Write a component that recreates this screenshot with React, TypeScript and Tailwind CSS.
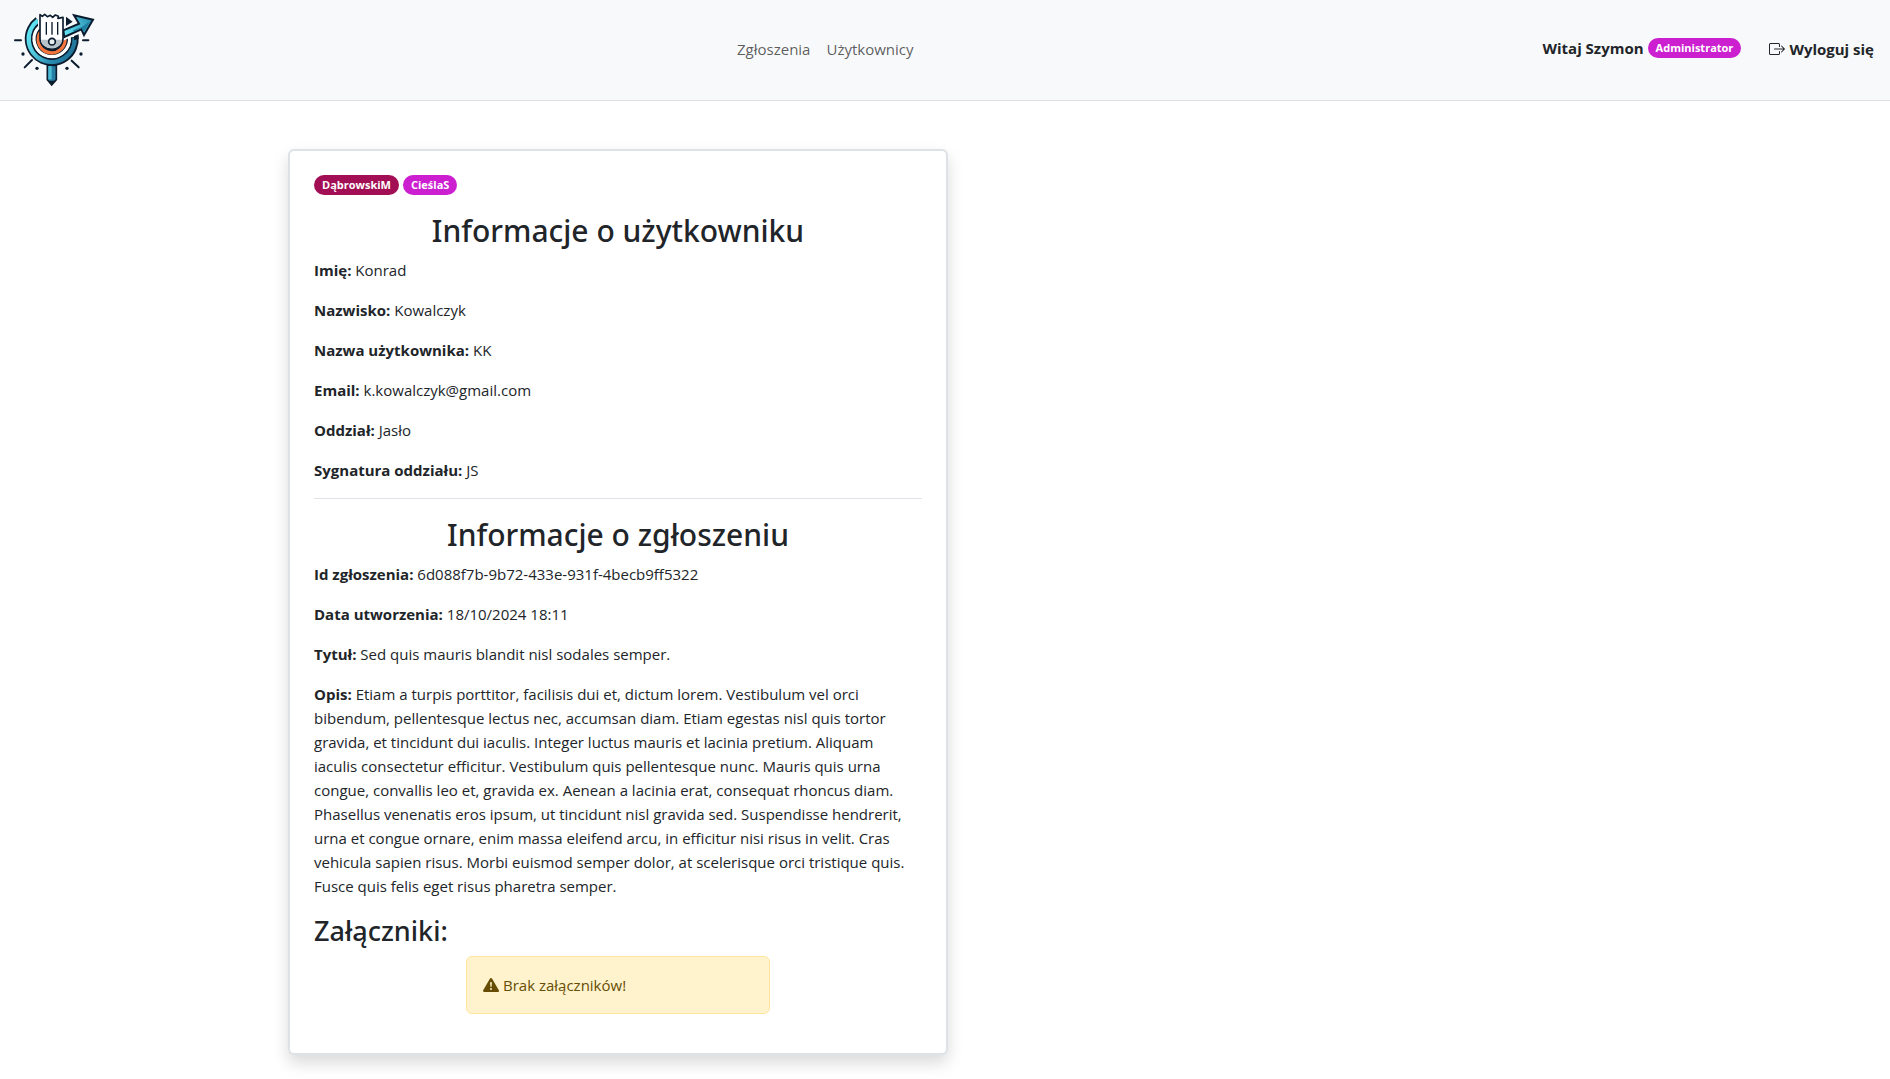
import { BsBoxArrowRight, BsExclamationTriangleFill } from "react-icons/bs";

const userInfo = [
  ["Imię:", "Konrad"],
  ["Nazwisko:", "Kowalczyk"],
  ["Nazwa użytkownika:", "KK"],
  ["Email:", "k.kowalczyk@gmail.com"],
  ["Oddział:", "Jasło"],
  ["Sygnatura oddziału:", "JS"],
];

const ticketInfo = [
  ["Id zgłoszenia:", "6d088f7b-9b72-433e-931f-4becb9ff5322"],
  ["Data utworzenia:", "18/10/2024 18:11"],
  ["Tytuł:", "Sed quis mauris blandit nisl sodales semper."],
  [
    "Opis:",
    "Etiam a turpis porttitor, facilisis dui et, dictum lorem. Vestibulum vel orci bibendum, pellentesque lectus nec, accumsan diam. Etiam egestas nisl quis tortor gravida, et tincidunt dui iaculis. Integer luctus mauris et lacinia pretium. Aliquam iaculis consectetur efficitur. Vestibulum quis pellentesque nunc. Mauris quis urna congue, convallis leo et, gravida ex. Aenean a lacinia erat, consequat rhoncus diam. Phasellus venenatis eros ipsum, ut tincidunt nisl gravida sed. Suspendisse hendrerit, urna et congue ornare, enim massa eleifend arcu, in efficitur nisi risus in velit. Cras vehicula sapien risus. Morbi euismod semper dolor, at scelerisque orci tristique quis. Fusce quis felis eget risus pharetra semper.",
  ],
];

function Logo() {
  return (
    <svg viewBox="36 36 252 228" className="h-[76px] w-[84px]" role="img" aria-label="Logo">
      <defs>
        <linearGradient id="ring" gradientUnits="userSpaceOnUse" x1="80" y1="90" x2="225" y2="170">
          <stop offset="0" stopColor="#62e8f4" />
          <stop offset="0.35" stopColor="#4fc3d9" />
          <stop offset="0.65" stopColor="#2a8bb0" />
          <stop offset="1" stopColor="#1f6f93" />
        </linearGradient>
        <linearGradient id="arrow" gradientUnits="userSpaceOnUse" x1="195" y1="100" x2="275" y2="60">
          <stop offset="0" stopColor="#63e3f0" />
          <stop offset="1" stopColor="#2b8fb2" />
        </linearGradient>
      </defs>
      <path d="M114 61.5A69 69 0 1 0 224 111" fill="none" stroke="#0b1c2e" strokeWidth="24" />
      <path d="M114 61.5A69 69 0 1 0 224 114" fill="none" stroke="url(#ring)" strokeWidth="13" />
      <path d="M112 86A53 53 0 1 0 207.500 110" fill="none" stroke="#ffffff" strokeWidth="9" />
      <path d="M125 92A39 39 0 1 0 194 111" fill="none" stroke="#0b1c2e" strokeWidth="19" />
      <path d="M125 92A40 40 0 1 0 194 111" fill="none" stroke="#f4753c" strokeWidth="10" />
      <path
        d="M190 89l47-20-16-25 62 14-29 51-7-20-54 25z"
        fill="none"
        stroke="#f8f9fa"
        strokeWidth="12"
      />
      <path d="M198 50l20 15-20 13z" fill="#0b1c2e" />
      <path d="M222 108l14-5v14l-14 4z" fill="#0b1c2e" />
      <path
        d="M190 91l47-20-15-25 57 13-27 46-8-17-51 23z"
        fill="url(#arrow)"
        stroke="#0b1c2e"
        strokeWidth="6"
      />
      <path d="M220 91l25-10 26-18-20 34-6-13-24 11z" fill="#1f7fa3" />
      <path d="M114 40h82v44h-82z" fill="#f8f9fa" />
      <path
        d="M120 44l7 5 7-6 8 7 9-4 7 6 8-7 9 4-1 6 15-3v64c0 18-15 31-34 31s-35-12-35-31z"
        fill="#ffffff"
        stroke="#0b1c2e"
        strokeWidth="5"
        strokeLinejoin="round"
      />
      <path d="M123 119h63c0 16-14 26-31 26s-31-10-32-26z" fill="#b8c2ca" />
      <path d="M139 66v38M156 66v38M173 66v38" stroke="#0b1c2e" strokeWidth="4" />
      <circle cx="156" cy="125" r="10" fill="#e7ecef" stroke="#0b1c2e" strokeWidth="5" />
      <path d="M142 196h27v43l-14 16-13-16z" fill="#287fa4" stroke="#0b1c2e" strokeWidth="5" />
      <path d="M145 198h10v40h-10z" fill="#4cbcd3" />
      <path d="M144 242h23l-12 12z" fill="#0b1c2e" />
      <path
        d="M45 121h18M249 121h16M96 180l-22 22M215 182l21 20"
        stroke="#0b1c2e"
        strokeWidth="6"
        strokeLinecap="round"
      />
      <g fill="#0b1c2e">
        <circle cx="69" cy="162" r="5" />
        <circle cx="243" cy="162" r="5" />
        <circle cx="111" cy="205" r="5" />
        <circle cx="201" cy="205" r="5" />
      </g>
    </svg>
  );
}

function Badge({ color, children }: { color: string; children: string }) {
  return (
    <span className={`inline-block rounded-full px-2 text-[11px] leading-5 font-bold text-white ${color}`}>
      {children}
    </span>
  );
}

function SectionTitle({ children }: { children: string }) {
  return (
    <h2 className="mb-2 text-center font-['Noto_Sans','Open_Sans',sans-serif] text-[30px] leading-[39px] font-medium">
      {children}
    </h2>
  );
}

function Details({ rows }: { rows: string[][] }) {
  return (
    <>
      {rows.map(([label, value]) => (
        <p key={label} className="mb-4 pr-2">
          <strong className="font-bold">{label}</strong> {value}
        </p>
      ))}
    </>
  );
}

export default function App() {
  return (
    <div className="min-h-screen font-['Open_Sans','Noto_Sans',sans-serif] text-[15px] leading-6 text-[#212529]">
      <header className="flex h-[101px] items-center justify-between border-b border-[#dee2e6] bg-[#f8f9fa] pr-4 pl-3">
        <a href="#" className="mr-3">
          <Logo />
        </a>
        <nav className="flex gap-4 pb-0.5 text-black/65">
          <a href="#">Zgłoszenia</a>
          <a href="#">Użytkownicy</a>
        </nav>
        <div className="flex items-center gap-7 font-bold">
          <div className="flex items-center gap-1 pb-1">
            Witaj Szymon <Badge color="bg-[#cb1fd0]">Administrator</Badge>
          </div>
          <button type="button" className="flex items-center gap-1 pb-0.5">
            <BsBoxArrowRight className="size-4" />
            Wyloguj się
          </button>
        </div>
      </header>

      <main className="mx-auto mt-12 max-w-[1314px] pb-6">
        <section className="w-[660px] max-w-full rounded-md border-2 border-[#dee2e6] bg-white p-6 pb-[23px] shadow-[0_8px_16px_rgba(0,0,0,0.15)]">
          <div className="mb-4 flex gap-1">
            <Badge color="bg-[#a30f55]">DąbrowskiM</Badge>
            <Badge color="bg-[#cb1fd0]">CieślaS</Badge>
          </div>
          <SectionTitle>Informacje o użytkowniku</SectionTitle>
          <Details rows={userInfo} />
          <hr className="mb-4 border-[#dee2e6]" />
          <SectionTitle>Informacje o zgłoszeniu</SectionTitle>
          <Details rows={ticketInfo} />
          <h3 className="mb-2 font-['Noto_Sans','Open_Sans',sans-serif] text-[27px] leading-[34px] font-medium">
            Załączniki:
          </h3>
          <div
            role="alert"
            className="mx-auto mb-4 flex w-1/2 items-center gap-1 rounded-md border border-[#ffe69c] bg-[#fff3cd] p-4 text-[#664d03]"
          >
            <BsExclamationTriangleFill className="size-4" />
            Brak załączników!
          </div>
        </section>
      </main>
    </div>
  );
}
